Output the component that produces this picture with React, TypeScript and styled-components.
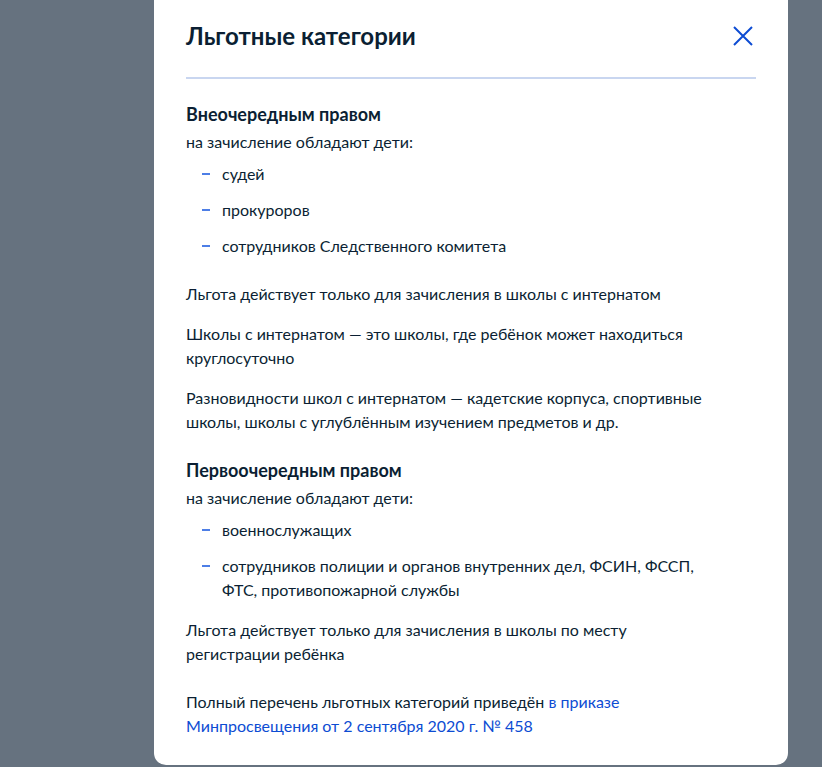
import React from 'react';
import styled, { createGlobalStyle } from 'styled-components';

const GlobalStyle = createGlobalStyle`
  html, body {
    margin: 0;
    padding: 0;
    background: #66727f;
    font-family: Lato, "Noto Sans", sans-serif;
    color: #0b1f33;
    -webkit-font-smoothing: antialiased;
  }
`;

const Overlay = styled.div`
  min-height: 767px;
  display: flex;
  align-items: flex-start;
  padding-left: 154px;
  box-sizing: border-box;
`;

const Modal = styled.div`
  width: 634px;
  box-sizing: border-box;
  background: #ffffff;
  border-radius: 0 0 12px 12px;
  padding: 20px 32px 27px;
`;

const Header = styled.div`
  display: flex;
  align-items: center;
  justify-content: space-between;
  padding-bottom: 25px;
  border-bottom: 2px solid #c9d6f0;
`;

const Title = styled.h2`
  margin: 0;
  font-size: 24px;
  line-height: 32px;
  font-weight: 700;
`;

const CloseButton = styled.button`
  border: none;
  background: none;
  padding: 0;
  margin-right: 1px;
  width: 24px;
  height: 24px;
  display: flex;
  align-items: center;
  justify-content: center;
  cursor: pointer;
`;

const Body = styled.div`
  padding-top: 23px;
  max-width: 530px;
`;

const SectionTitle = styled.h3<{ $top?: number }>`
  margin: ${p => p.$top ?? 0}px 0 4px;
  font-size: 18px;
  line-height: 24px;
  font-weight: 700;
`;

const Text = styled.p<{ $top?: number }>`
  margin: ${p => p.$top ?? 0}px 0 0;
  font-size: 16px;
  line-height: 24px;
`;

const Link = styled.a`
  color: #0d4cd3;
  text-decoration: none;
`;

const List = styled.ul<{ $bottom: number }>`
  list-style: none;
  margin: 8px 0 ${p => p.$bottom}px;
  padding: 0 0 0 16px;
  display: flex;
  flex-direction: column;
  gap: 12px;
`;

const Item = styled.li`
  position: relative;
  padding-left: 20px;
  font-size: 16px;
  line-height: 24px;

  &::before {
    content: '';
    position: absolute;
    left: 0;
    top: 11px;
    width: 8px;
    height: 2px;
    background: #4d7ee6;
  }
`;

const CloseIcon = () => (
  <svg width="20" height="20" viewBox="0 0 20 20" fill="none">
    <path d="M1 1L19 19M19 1L1 19" stroke="#0d4cd3" strokeWidth="2" />
  </svg>
);

const App: React.FC = () => (
  <>
    <GlobalStyle />
    <Overlay>
      <Modal>
        <Header>
          <Title>Льготные категории</Title>
          <CloseButton aria-label="Закрыть">
            <CloseIcon />
          </CloseButton>
        </Header>
        <Body>
          <SectionTitle>Внеочередным правом</SectionTitle>
          <Text>на зачисление обладают дети:</Text>
          <List $bottom={24}>
            <Item>судей</Item>
            <Item>прокуроров</Item>
            <Item>сотрудников Следственного комитета</Item>
          </List>
          <Text>Льгота действует только для зачисления в школы с интернатом</Text>
          <Text $top={16}>Школы с интернатом — это школы, где ребёнок может находиться круглосуточно</Text>
          <Text $top={16}>
            Разновидности школ с интернатом — кадетские корпуса, спортивные школы, школы с углублённым изучением предметов и др.
          </Text>
          <SectionTitle $top={24}>Первоочередным правом</SectionTitle>
          <Text>на зачисление обладают дети:</Text>
          <List $bottom={16}>
            <Item>военнослужащих</Item>
            <Item>сотрудников полиции и органов внутренних дел, ФСИН, ФССП, ФТС, противопожарной службы</Item>
          </List>
          <Text>Льгота действует только для зачисления в школы по месту регистрации ребёнка</Text>
          <Text $top={24}>
            Полный перечень льготных категорий приведён{' '}
            <Link href="#">в приказе Минпросвещения от 2 сентября 2020 г. № 458</Link>
          </Text>
        </Body>
      </Modal>
    </Overlay>
  </>
);

export default App;
